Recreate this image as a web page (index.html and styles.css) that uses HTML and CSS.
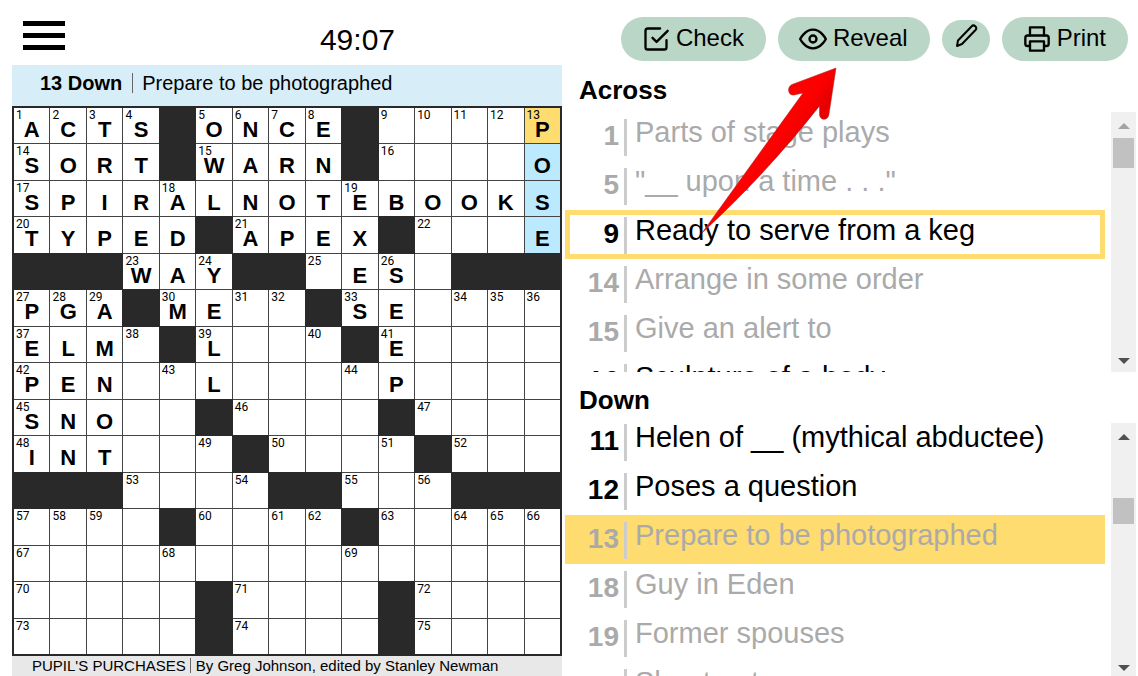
FILE: index.html
```html
<!DOCTYPE html>
<html lang="en">
<head>
<meta charset="utf-8">
<title>Crossword</title>
<link rel="stylesheet" href="styles.css">
</head>
<body>
<main class="app">
  <section class="board">
    <header class="board-head">
      <button class="menu" type="button" aria-label="Menu"><span class="bar"></span><span class="bar"></span><span class="bar"></span></button>
      <time class="timer">49:07</time>
    </header>
    <div class="current"><strong>13 Down</strong><span class="rule"></span><span>Prepare to be photographed</span></div>
    <div class="grid" id="grid"></div>
    <footer class="credits"><span>PUPIL'S PURCHASES</span><span class="rule"></span><span>By Greg Johnson, edited by Stanley Newman</span></footer>
  </section>

  <section class="side">
    <nav class="tools">
      <button class="tool" type="button">
        <svg class="icon" viewBox="0 0 24 24"><path d="M15.500 3H5a2 2 0 0 0-2 2v14a2 2 0 0 0 2 2h14a2 2 0 0 0 2-2v-6"/><path d="M9 11l3.500 3.500L22 5"/></svg>
        <span>Check</span>
      </button>
      <button class="tool" type="button">
        <svg class="icon" viewBox="0 0 24 24"><path d="M1 12s4-8 11-8 11 8 11 8-4 8-11 8S1 12 1 12z"/><circle cx="12" cy="12" r="3"/></svg>
        <span>Reveal</span>
      </button>
      <button class="tool tool-small" type="button" aria-label="Pencil">
        <svg class="icon icon-small" viewBox="0 0 24 24"><path d="M17.500 2.500a2.500 2.500 0 0 1 4 3.500L8 20l-5 2 1-5.500z"/></svg>
      </button>
      <button class="tool" type="button">
        <svg class="icon" viewBox="0 0 24 24"><path d="M6 9V2h12v7"/><path d="M6 18H4a2 2 0 0 1-2-2v-5a2 2 0 0 1 2-2h16a2 2 0 0 1 2 2v5a2 2 0 0 1-2 2h-2"/><path d="M6 14h12v8H6z"/></svg>
        <span>Print</span>
      </button>
    </nav>

    <h2 class="title title-across">Across</h2>
    <div class="pane pane-across">
      <ul class="clues">
        <li class="clue solved"><b class="num">1</b><span class="text">Parts of stage plays</span></li>
        <li class="clue solved"><b class="num">5</b><span class="text">"__ upon a time . . ."</span></li>
        <li class="clue crossing"><b class="num">9</b><span class="text">Ready to serve from a keg</span></li>
        <li class="clue solved"><b class="num">14</b><span class="text">Arrange in some order</span></li>
        <li class="clue solved"><b class="num">15</b><span class="text">Give an alert to</span></li>
        <li class="clue"><b class="num">16</b><span class="text">Sculpture of a body</span></li>
      </ul>
      <div class="track track-top"><span class="arrow up dim"></span><span class="thumb"></span><span class="arrow down"></span></div>
    </div>

    <h2 class="title title-down">Down</h2>
    <div class="pane pane-down">
      <ul class="clues clues-scrolled">
        <li class="clue"><b class="num">11</b><span class="text">Helen of __ (mythical abductee)</span></li>
        <li class="clue"><b class="num">12</b><span class="text">Poses a question</span></li>
        <li class="clue solved active"><b class="num">13</b><span class="text">Prepare to be photographed</span></li>
        <li class="clue solved"><b class="num">18</b><span class="text">Guy in Eden</span></li>
        <li class="clue solved"><b class="num">19</b><span class="text">Former spouses</span></li>
        <li class="clue solved"><b class="num">24</b><span class="text">Shout out</span></li>
      </ul>
      <div class="track track-middle"><span class="arrow up"></span><span class="thumb"></span><span class="arrow down"></span></div>
    </div>
    <svg class="pointer" viewBox="0 0 140 172">
      <defs><linearGradient id="red" gradientUnits="userSpaceOnUse" x1="88" y1="50" x2="108" y2="64"><stop offset="0" stop-color="#ff0000"/><stop offset="0.450" stop-color="#fb0000"/><stop offset="1" stop-color="#e60000"/></linearGradient></defs>
      <path fill="url(#red)" stroke="#a52020" stroke-width="0.500" d="M136 4L92 20.500C86.500 23 88 32 94 31L103 29Q53 98 2 169Q68 108 119.500 42V50C119.500 57 128.500 57 129 50Z"/>
    </svg>
  </section>
</main>
<script src="grid.js"></script>
</body>
</html>
```
FILE: styles.css
```css
* { box-sizing: border-box; }
body {
  margin: 0;
  background: #fff;
  color: #000;
  font-family: "Liberation Sans", Arial, sans-serif;
}
button { border: 0; padding: 0; color: inherit; font: inherit; cursor: pointer; }

.app {
  display: grid;
  grid-template-columns: 550fr 576fr;
  height: 100vh;
  padding-left: 12px;
  overflow: hidden;
}

.board { display: flex; flex-direction: column; min-width: 0; }
.board-head {
  display: flex;
  justify-content: space-between;
  align-items: flex-start;
  height: 65px;
  padding: 21px 167px 0 11px;
}
.menu { display: flex; flex-direction: column; gap: 7px; background: none; }
.bar { width: 42px; height: 5px; background: #000; }
.timer { font-size: 30px; line-height: 38px; }

.current {
  display: flex;
  align-items: center;
  height: 41px;
  padding: 0 28px 5px;
  background: #d7eef8;
  font-size: 20px;
}
.rule { width: 1px; background: #666; }
.current .rule { height: 20px; margin: 0 9px 0 10px; }

.grid {
  display: grid;
  grid-template-columns: repeat(15, 1fr);
  grid-template-rows: repeat(15, 1fr);
  gap: 1px;
  aspect-ratio: 1;
  border: 2px solid #292929;
  background: #444;
}
.cell { position: relative; display: flex; justify-content: center; min-width: 0; min-height: 0; background: #fff; }
.block { background: #292929; outline: 1px solid #292929; }
.word { background: #bbeaff; }
.cursor { background: #fedc70; }
.cell-num {
  position: absolute;
  top: 1px;
  left: 2px;
  font: 12px/12px Roboto, sans-serif;
}
.letter { padding-top: 14px; font-size: 22px; line-height: 16px; font-weight: bold; }

.credits {
  display: flex;
  flex: 1;
  align-items: center;
  padding: 0 0 2px 20px;
  background: #e8e8e8;
  font-size: 15px;
}
.credits .rule { height: 15px; margin: 0 5px 0 4px; }

.side { position: relative; display: flex; flex-direction: column; min-width: 0; padding-right: 2px; }
.tools {
  display: flex;
  justify-content: flex-end;
  align-items: center;
  gap: 12px;
  height: 61px;
  padding: 17px 8px 0 0;
}
.tool {
  display: flex;
  align-items: center;
  gap: 6px;
  height: 44px;
  padding: 0 22px 0 21px;
  border-radius: 22px;
  background: #bad6c7;
  font-size: 24px;
  line-height: 26px;
}
.tool span { padding-bottom: 2px; }
.tool-small { height: 38px; padding: 0 12px 6px; border-radius: 19px; }
.icon {
  width: 28px;
  height: 28px;
  fill: none;
  stroke: #000;
  stroke-width: 2;
  stroke-linecap: round;
  stroke-linejoin: round;
}
.icon-small { width: 24px; height: 24px; }

.title { margin: 0; padding-left: 17px; font-size: 26px; line-height: 30px; }
.title-across { height: 51px; padding-top: 14px; }
.title-down { height: 51px; padding-top: 13px; }

.pane { display: flex; min-height: 0; overflow: hidden; }
.pane-across { flex: 260 1 0; }
.pane-down { flex: 253 1 0; }
.clues { flex: 1; min-width: 0; margin: 0 6px 0 3px; padding: 0; list-style: none; }
.clues-scrolled { margin-top: -6px; }
.clue { display: flex; height: 49px; padding: 7px 0 5px; font-size: 29px; }
.num {
  width: 62px;
  padding-right: 5px;
  border-right: 3px solid #ccc;
  text-align: right;
  font-size: 28px;
  line-height: 33px;
}
.text { padding-left: 8px; line-height: 27px; white-space: nowrap; }
.solved { color: #aaa; }
.crossing { box-shadow: inset 0 0 0 5px #fedc70; }
.active { background: #fedc70; }

.track {
  display: flex;
  flex-direction: column;
  align-items: center;
  width: 25px;
  padding: 11px 0 8px;
  background: #f0f0f0;
}
.arrow { border: 6px solid transparent; border-top-width: 0; border-bottom: 6px solid #505050; }
.down { margin-top: auto; border-top: 6px solid #505050; border-bottom-width: 0; }
.dim { border-bottom-color: #a3a3a3; }
.thumb { width: 21px; height: 30px; margin-top: 9px; background: #c1c1c1; }
.track-middle .thumb { height: 26px; margin-top: 58px; }
.track-middle { padding-bottom: 5px; }

.pointer { position: absolute; top: 64px; left: 138px; width: 140px; height: 172px; pointer-events: none; }
```
FILE: grid.js
```js
// '#' is a block, '.' an empty square, a letter a filled square
const rows = [
  'ACTS#ONCE#....P',
  'SORT#WARN#....O',
  'SPIRALNOTEBOOKS',
  'TYPED#APEX#...E',
  '###WAY##.ES.###',
  'PGA#ME..#SE....',
  'ELM.#L...#E....',
  'PEN..L....P....',
  'SNO..#....#....',
  'INT...#....#...',
  '###....##...###',
  '....#....#.....',
  '...............',
  '.....#....#....',
  '.....#....#....'
];
const open = (r, c) => rows[r] !== undefined && rows[r][c] !== undefined && rows[r][c] !== '#';
const grid = document.getElementById('grid');
let next = 1;

function add(parent, className, text) {
  const el = document.createElement('span');
  el.className = className;
  el.textContent = text;
  parent.append(el);
  return el;
}

rows.forEach((row, r) => [...row].forEach((ch, c) => {
  const cell = add(grid, 'cell', '');
  if (ch === '#') { cell.classList.add('block'); return; }
  if (c === 14 && r < 4) cell.classList.add(r === 0 ? 'cursor' : 'word');
  const startsAcross = !open(r, c - 1) && open(r, c + 1);
  const startsDown = !open(r - 1, c) && open(r + 1, c);
  if (startsAcross || startsDown) add(cell, 'cell-num', next++);
  if (ch !== '.') add(cell, 'letter', ch);
}));
```
